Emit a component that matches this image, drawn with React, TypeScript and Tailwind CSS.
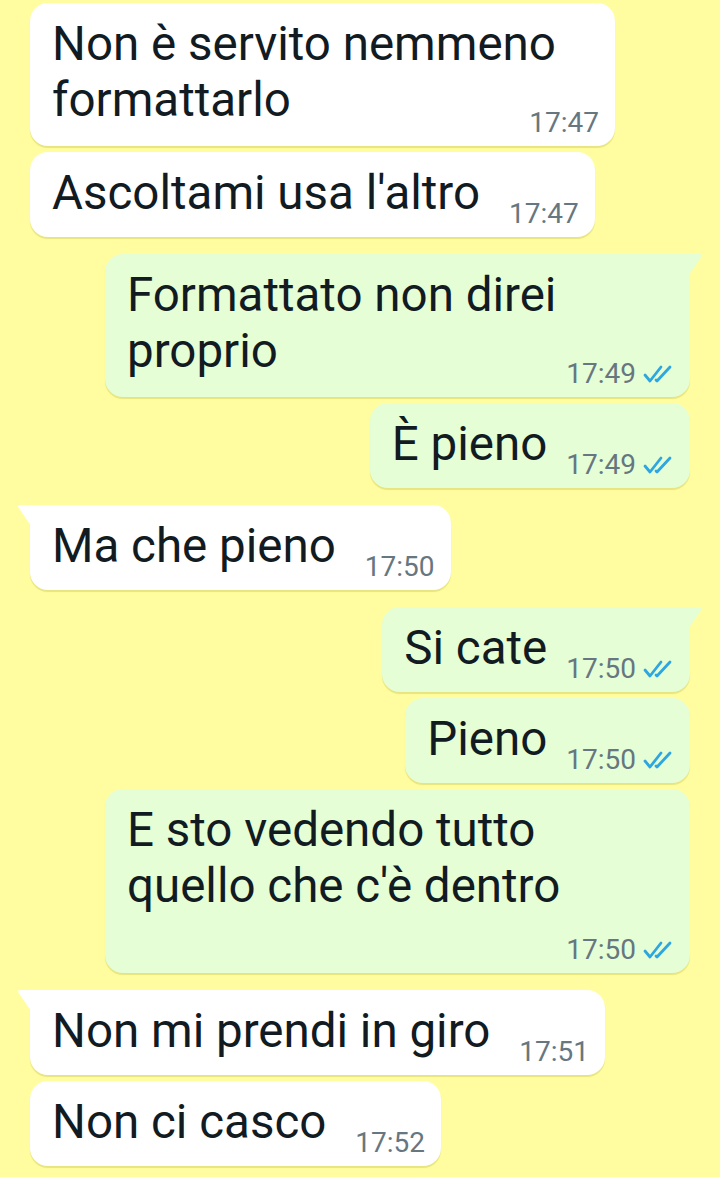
type Msg = {
  text: string
  time: string
  out: boolean
  layout: "single" | "inline" | "below"
  tail?: boolean
}

const messages: Msg[] = [
  { text: "Non è servito nemmeno formattarlo", time: "17:47", out: false, layout: "inline" },
  { text: "Ascoltami usa l'altro", time: "17:47", out: false, layout: "single" },
  { text: "Formattato non direi proprio", time: "17:49", out: true, layout: "inline", tail: true },
  { text: "È pieno", time: "17:49", out: true, layout: "single" },
  { text: "Ma che pieno", time: "17:50", out: false, layout: "single", tail: true },
  { text: "Si cate", time: "17:50", out: true, layout: "single", tail: true },
  { text: "Pieno", time: "17:50", out: true, layout: "single" },
  { text: "E sto vedendo tutto quello che c'è dentro", time: "17:50", out: true, layout: "below" },
  { text: "Non mi prendi in giro", time: "17:51", out: false, layout: "single", tail: true },
  { text: "Non ci casco", time: "17:52", out: false, layout: "single" },
]

function Ticks() {
  return (
    <svg width="30" height="20" viewBox="0 0 30 20" fill="none" stroke="#2ea6df" strokeWidth="2.8" strokeLinecap="round" strokeLinejoin="round" className="ml-[7px] shrink-0" aria-hidden="true">
      <polyline points="2 11 7 17 18 3" />
      <polyline points="13 16 14 17 27 3" />
    </svg>
  )
}

function Tail({ out }: { out: boolean }) {
  return out ? (
    <svg width="14" height="21" viewBox="0 0 14 21" className="absolute top-0 right-[-13px]" aria-hidden="true">
      <path d="M0 0 H11 Q14 0 12.5 2.5 L0 21 Z" fill="#e6fed6" />
    </svg>
  ) : (
    <svg width="14" height="21" viewBox="0 0 14 21" className="absolute top-0 left-[-13px]" aria-hidden="true">
      <path d="M14 0 H3 Q0 0 1.5 2.5 L14 21 Z" fill="#ffffff" />
    </svg>
  )
}

function Time({ m }: { m: Msg }) {
  return (
    <div className="flex items-center shrink-0">
      <span className="text-[28px] leading-[33px] text-[#667781]">{m.time}</span>
      {m.out && <Ticks />}
    </div>
  )
}

function Bubble({ m }: { m: Msg }) {
  const color = m.out ? "bg-[#e6fed6]" : "bg-white"
  const corner = m.tail ? (m.out ? "rounded-tr-none" : "rounded-tl-none") : ""
  const pr = m.out ? "pr-[17px]" : "pr-[16px]"

  if (m.layout === "single") {
    return (
      <div className={`relative ${color} ${corner} ${pr} rounded-[18px] pl-[22px] pt-[13px] pb-[7px] shadow-[0_2px_1px_rgba(150,140,20,0.22)]`}>
        {m.tail && <Tail out={m.out} />}
        <div className="flex items-end">
          <span className="whitespace-nowrap leading-[56px] pb-[9px]">{m.text}</span>
          <div className={m.out ? "ml-[19px]" : "ml-[29px]"}>
            <Time m={m} />
          </div>
        </div>
      </div>
    )
  }

  return (
    <div className={`relative w-[585px] ${color} ${corner} ${pr} rounded-[18px] pl-[22px] pt-[13px] pb-[7px] shadow-[0_2px_1px_rgba(150,140,20,0.22)]`}>
      {m.tail && <Tail out={m.out} />}
      <p className="leading-[56px] pr-[10px]">{m.text}</p>
      <div className={`flex justify-end ${m.layout === "inline" ? "-mt-[22px]" : "mt-[19px]"}`}>
        <Time m={m} />
      </div>
    </div>
  )
}

export default function App() {
  return (
    <div className="min-h-[1177px] bg-[#fffd9f] px-[30px] pt-[3px] font-['Roboto',sans-serif] text-[47.5px] text-[#111b21] overflow-hidden">
      <div className="flex flex-col">
        {messages.map((m, i) => (
          <div
            key={i}
            className={`flex ${m.out ? "justify-end" : "justify-start"} ${i === 0 ? "" : m.tail ? "mt-[17px]" : "mt-[6px]"}`}
          >
            <Bubble m={m} />
          </div>
        ))}
      </div>
    </div>
  )
}
